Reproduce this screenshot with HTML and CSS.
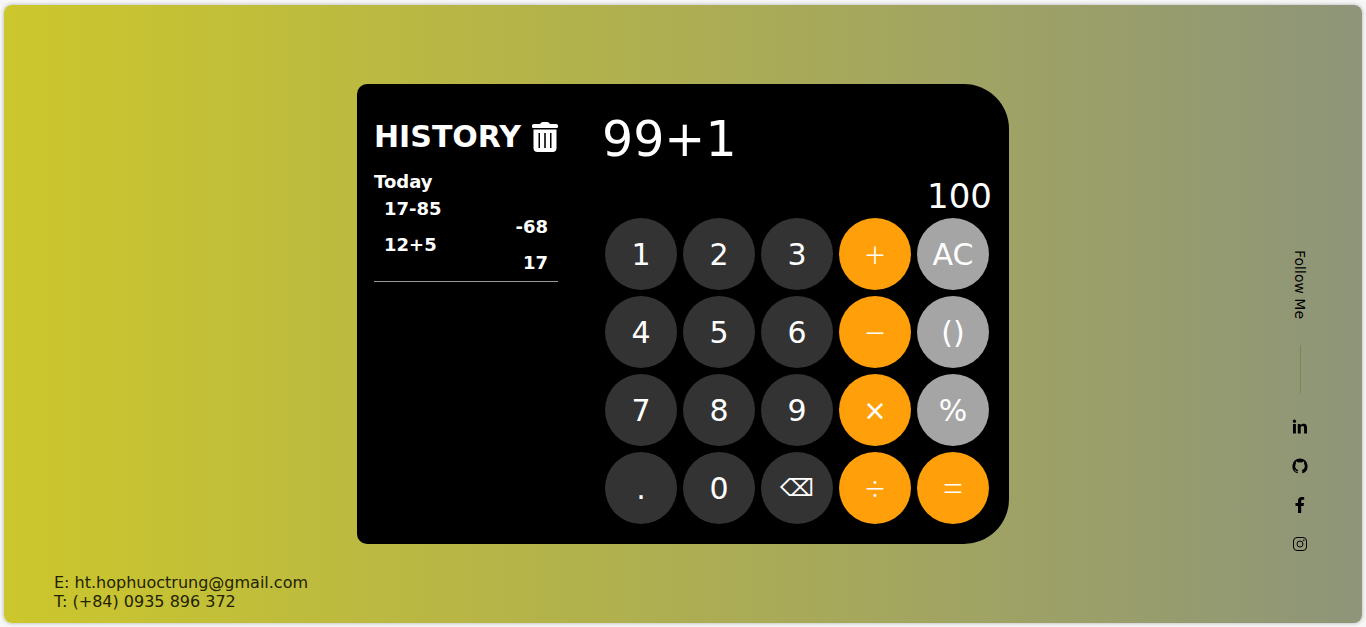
FILE: index.html
```html
<!DOCTYPE html>
<html lang="en">
<head>
<meta charset="utf-8">
<meta name="viewport" content="width=device-width, initial-scale=1">
<title>Calculator</title>
<link rel="stylesheet" href="styles.css">
</head>
<body>
<main class="stage">
  <address class="contact">
    <a href="mailto:ht.hophuoctrung@gmail.com">E: ht.hophuoctrung@gmail.com</a>
    <a href="tel:+840935896372">T: (+84) 0935 896 372</a>
  </address>

  <div class="calculator">
    <section class="history">
      <header class="history-head">
        <h1 class="history-title">HISTORY</h1>
        <button class="history-clear" type="button" aria-label="Clear history">
          <svg width="26" height="30" viewBox="0 0 26 30" fill="#fff">
            <path d="M0 3.500q0-1.500 2-1.500h6q1-2 3-2h4q2 0 3 2h6q2 0 2 1.500V5q0 1-1 1H1Q0 6 0 5z"/>
            <path fill-rule="evenodd" d="M1.500 7.500h23V26q0 4-4 4h-15q-4 0-4-4zM6.500 11v15H8V11zM12.200 11v15h1.600V11zM18 11v15h1.500V11z"/>
          </svg>
        </button>
      </header>
      <div class="history-day">
        <h2 class="history-date">Today</h2>
        <ul class="history-list">
          <li class="entry"><span>17-85</span><span class="entry-result">-68</span></li>
          <li class="entry"><span>12+5</span><span class="entry-result">17</span></li>
        </ul>
      </div>
    </section>

    <section class="pad">
      <output class="expression">99+1</output>
      <output class="result">100</output>
      <div class="keys">
        <button class="key" type="button">1</button>
        <button class="key" type="button">2</button>
        <button class="key" type="button">3</button>
        <button class="key key-operator" type="button">+</button>
        <button class="key key-function" type="button">AC</button>
        <button class="key" type="button">4</button>
        <button class="key" type="button">5</button>
        <button class="key" type="button">6</button>
        <button class="key key-operator" type="button">−</button>
        <button class="key key-function" type="button">()</button>
        <button class="key" type="button">7</button>
        <button class="key" type="button">8</button>
        <button class="key" type="button">9</button>
        <button class="key key-operator key-times" type="button">×</button>
        <button class="key key-function" type="button">%</button>
        <button class="key" type="button">.</button>
        <button class="key" type="button">0</button>
        <button class="key key-erase" type="button" aria-label="Backspace">⌫</button>
        <button class="key key-operator" type="button">÷</button>
        <button class="key key-operator" type="button">=</button>
      </div>
    </section>
  </div>

  <aside class="social">
    <span class="social-label">Follow Me</span>
    <span class="social-line"></span>
    <nav class="social-links">
      <a href="#linkedin" aria-label="LinkedIn">
        <svg width="16" height="16" viewBox="0 0 16 16"><path d="M1 5h2.900v9.500H1zM2.450.5a1.700 1.700 0 1 1 0 3.400 1.700 1.700 0 0 1 0-3.400zM5.800 5h2.800v1.300c.5-.9 1.500-1.600 3-1.600 2.900 0 3.400 1.900 3.400 4.400v5.400h-2.900V9.600c0-1.200 0-2.600-1.600-2.600S8.700 8.200 8.700 9.500v5H5.800z"/></svg>
      </a>
      <a href="#github" aria-label="GitHub">
        <svg width="16" height="16" viewBox="0 0 16 16"><path d="M8 .5A7.700 7.700 0 0 0 5.200 15.300c.4.1.5-.2.5-.4v-1.300c-1.900.4-2.500-.6-2.800-1.200-.2-.4-.4-.6-.7-.8.6-.2 1.100.2 1.500.8.5.8 1.200.9 2 .6.1-.5.300-.8.6-1.100C4.300 11.600 3.200 10.300 3.200 8c0-.9.3-1.600.8-2.200-.2-.7-.2-1.500.1-2.200.8 0 1.500.4 2.100.8a7 7 0 0 1 3.600 0c.6-.4 1.300-.8 2.100-.8.3.7.3 1.500.1 2.200.5.6.8 1.300.8 2.200 0 2.300-1.100 3.600-3.100 3.900.4.4.600.9.6 1.600v1.400c0 .2.100.5.5.4A7.700 7.700 0 0 0 8 .5z"/></svg>
      </a>
      <a href="#facebook" aria-label="Facebook">
        <svg width="16" height="16" viewBox="0 0 16 16"><path d="M6 16V9H3.500V6.100H6V4C6 1.500 7.400 0 9.900 0c1.100 0 2 .1 2.300.2v2.500h-1.500c-1.200 0-1.500.6-1.500 1.500v1.900H12L11.600 9H9.200v7z"/></svg>
      </a>
      <a href="#instagram" aria-label="Instagram">
        <svg width="16" height="16" viewBox="0 0 16 16"><rect x="1.500" y="1.500" width="13" height="13" rx="3.500" fill="none" stroke="#000"/><circle cx="8" cy="8" r="3" fill="none" stroke="#000"/><circle cx="11.800" cy="4.200" r=".8"/></svg>
      </a>
    </nav>
  </aside>
</main>
</body>
</html>
```
FILE: styles.css
```css
* {
  box-sizing: border-box;
}

body {
  display: flex;
  min-height: 100vh;
  margin: 0;
  padding: 5px 4px 4px;
  background: #f7f7f7;
  font-family: Verdana, "DejaVu Sans", sans-serif;
}

.stage {
  flex: 1;
  display: grid;
  grid-template-columns: 1fr auto 1fr;
  border-radius: 8px;
  background: linear-gradient(to right, #ccc72c, #8e9579);
  box-shadow: 0 0 4px rgba(0, 0, 0, 0.3);
}

.contact {
  align-self: end;
  display: flex;
  flex-direction: column;
  padding: 0 0 12px 50px;
  font-size: 16px;
  font-style: normal;
  line-height: 19px;
}

.contact a {
  color: #222204;
  text-decoration: none;
}

.calculator {
  align-self: center;
  display: flex;
  gap: 44px;
  padding: 20px 17px;
  border-radius: 10px 45px 45px 10px;
  background: #000;
  color: #fff;
}

.history {
  width: 184px;
  padding-top: 18px;
  font-weight: bold;
}

.history-head {
  display: flex;
  align-items: center;
  justify-content: space-between;
  height: 30px;
}

.history-title {
  margin: 0;
  font-size: 30px;
  line-height: 32px;
}

.history-clear {
  display: flex;
  padding: 0;
  border: 0;
  background: none;
  cursor: pointer;
}

.history-day {
  margin-top: 18px;
  padding-bottom: 9px;
  border-bottom: 1px solid #999;
}

.history-date {
  margin: 0;
  font-size: 18px;
  line-height: 24px;
}

.history-list {
  margin: 6px 0 0;
  padding: 0 10px;
  list-style: none;
}

.entry {
  display: flex;
  flex-direction: column;
  font-size: 18px;
  line-height: 18px;
}

.entry-result {
  text-align: right;
}

.pad {
  display: flex;
  flex-direction: column;
}

.expression {
  font-size: 49px;
  line-height: 72px;
}

.result {
  padding-bottom: 2px;
  font-size: 34px;
  line-height: 40px;
  text-align: right;
}

.keys {
  display: grid;
  grid-template-columns: repeat(5, 72px);
  grid-auto-rows: 72px;
  gap: 6px;
  padding: 0 3px;
}

.key {
  padding: 0;
  border: 0;
  border-radius: 50%;
  background: #333;
  color: #fff;
  font-family: inherit;
  font-size: 30px;
  cursor: pointer;
}

.key-erase {
  font-size: 24px;
}

.key-operator {
  background: #ff9f0a;
  font-family: "Open Sans", sans-serif;
  font-size: 36px;
  font-weight: 300;
}

.key-times {
  font-weight: 400;
}

.key-function {
  background: #a5a5a5;
}

.social {
  justify-self: end;
  align-self: end;
  display: flex;
  flex-direction: column;
  align-items: center;
  padding: 0 54px 71px 0;
}

.social-label {
  font-size: 14px;
  line-height: 16px;
  writing-mode: vertical-rl;
}

.social-line {
  width: 1px;
  height: 48px;
  margin: 26px 0;
  background: #7d845c;
}

.social-links {
  display: flex;
  flex-direction: column;
  gap: 23px;
}

.social-links a {
  display: flex;
}
```
